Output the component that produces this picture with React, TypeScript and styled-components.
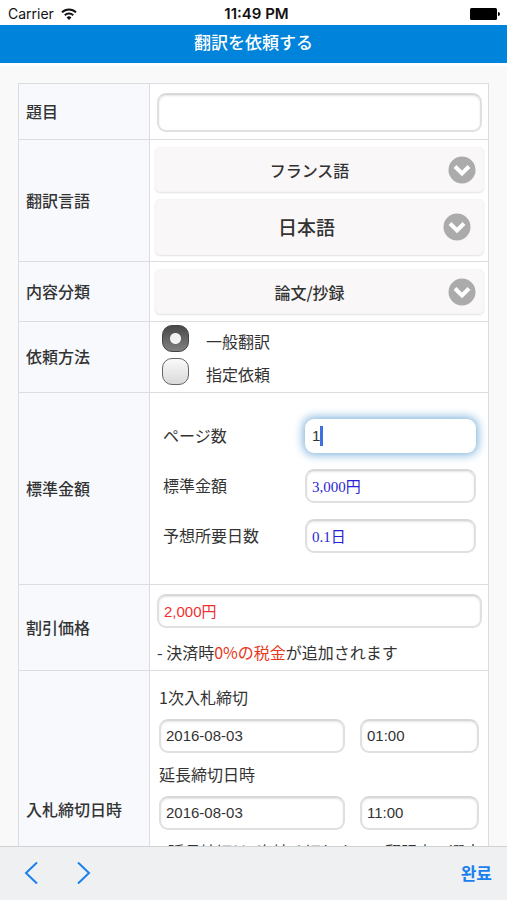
import React, { useState } from "react";
import styled, { createGlobalStyle, css } from "styled-components";

const jp = `"Noto Sans CJK JP", sans-serif`;
const latin = `"Liberation Sans", "Noto Sans CJK JP", sans-serif`;

const GlobalStyle = createGlobalStyle`
  *, *::before, *::after { box-sizing: border-box; }
  body {
    margin: 0;
    background: #f9f9f9;
    color: #333;
    font-family: ${jp};
    font-size: 16px;
    line-height: 24px;
  }
  button, input, select { font: inherit; color: inherit; margin: 0; }
`;

const Screen = styled.div`
  display: flex;
  flex-direction: column;
  height: 100vh;
`;

const StatusBar = styled.div`
  display: grid;
  grid-template-columns: 1fr auto 1fr;
  align-items: center;
  flex: none;
  height: 25px;
  padding: 2px 7px 0 8px;
  background: #fff;
  color: #111;
  font-family: Inter, sans-serif;
  font-size: 14px;
`;

const Carrier = styled.div`
  display: flex;
  align-items: center;
  gap: 7px;
`;

const Clock = styled.time`
  padding-left: 5px;
  font-size: 15px;
  font-weight: 600;
`;

const Battery = styled.svg`
  justify-self: end;
`;

const Header = styled.header`
  flex: none;
  height: 41px;
  background: #0083da;
  border-bottom: 3px solid #fff;
  color: #fff;
  text-align: center;
`;

const Title = styled.h1`
  margin: 0;
  padding-top: 5px;
  font-size: 17px;
  font-weight: 500;
  line-height: 24px;
`;

const Content = styled.main`
  flex: 1;
  min-height: 0;
  overflow-y: auto;
  scrollbar-width: none;
  padding: 17px 18px;
`;

const Form = styled.form`
  border: 1px solid #dcdde0;
  background: #fff;
`;

const Row = styled.div`
  display: grid;
  grid-template-columns: 131px 1fr;
  & + & { border-top: 1px solid #dcdde0; }
`;

const RowLabel = styled.label`
  display: flex;
  align-items: center;
  padding: 0 7px 2px;
  border-right: 1px solid #dcdde0;
  background: #f7f9fd;
  font-weight: 500;
`;

const Cell = styled.div<{ $pad: string; $gap?: number }>`
  display: flex;
  flex-direction: column;
  gap: ${(p) => p.$gap ?? 0}px;
  min-width: 0;
  padding: ${(p) => p.$pad};
`;

const TextInput = styled.input<{ $tone?: "blue" | "red"; $tall?: boolean }>`
  width: 100%;
  min-width: 0;
  height: ${(p) => (p.$tall ? 39 : 34)}px;
  padding: 0 5px 2px;
  border: 2px solid #e0e0e0;
  border-top-color: #d8d8d8;
  border-radius: 9px;
  background: #fff;
  box-shadow: inset 0 1px 2px #e4e4e4;
  outline: none;
  font-family: ${latin};
  font-size: 15px;
  ${(p) => p.$tone === "blue" && css`
    color: #2a1fd8;
    font-family: "Liberation Serif", "Noto Sans CJK JP", serif;
  `}
  ${(p) => p.$tone === "red" && css`color: #f03030;`}
`;

const FocusedField = styled.div`
  display: flex;
  align-items: center;
  height: 34px;
  padding: 0 7px;
  border-radius: 9px;
  background: #fff;
  box-shadow: 0 0 10px 2px #7fb4dc;
`;

const PageInput = styled.input`
  width: 8px;
  padding: 0;
  border: 0;
  outline: none;
  background: transparent;
  font-family: ${latin};
  font-size: 15px;
`;

const Caret = styled.span`
  width: 3px;
  height: 20px;
  background: #3f6fe0;
`;

const SelectBox = styled.div`
  position: relative;
`;

const Select = styled.select<{ $large?: boolean }>`
  display: block;
  width: 100%;
  height: ${(p) => (p.$large ? 56 : 45)}px;
  padding: ${(p) => (p.$large ? "0 32px 0 6px" : "0 26px 0 6px")};
  appearance: none;
  border: 1px solid #f6f5f5;
  border-radius: 5px;
  background: #f9f7f8;
  box-shadow: 0 1px 2px #e2e2e2;
  font-size: ${(p) => (p.$large ? 19 : 16)}px;
  font-weight: 500;
  text-align: center;
  text-align-last: center;
`;

const Chevron = styled.svg<{ $large?: boolean }>`
  position: absolute;
  top: 0;
  bottom: 0;
  right: ${(p) => (p.$large ? 13 : 8)}px;
  margin: auto 0;
  pointer-events: none;
`;

const RadioLabel = styled.label`
  display: flex;
  align-items: center;
  gap: 17px;
  height: 33px;
`;

const RadioText = styled.span`
  padding-top: 5px;
`;

const Radio = styled.input`
  appearance: none;
  width: 27px;
  height: 27px;
  border: 1px solid #666;
  border-radius: 10px;
  background: linear-gradient(#fafafa, #d9d9d9);
  &:checked {
    border-color: #444;
    background:
      radial-gradient(circle, #f2f2f2 0 5px, transparent 6px),
      linear-gradient(#484848, #808080);
  }
`;

const PriceLine = styled.div`
  display: grid;
  grid-template-columns: 142px 1fr;
  align-items: center;
`;

const PriceLabel = styled.label`
  padding-bottom: 2px;
`;

const Schedule = styled.div`
  display: grid;
  grid-template-columns: 186fr 119fr;
  gap: 15px;
  padding: 9px 7px 8px 0;
`;

const SubLabel = styled.div`
  line-height: 26px;
`;

const Note = styled.p`
  margin: 0;
`;

const Red = styled.span`
  color: #e8371a;
`;

const KeyboardBar = styled.nav`
  display: flex;
  align-items: center;
  flex: none;
  height: 54px;
  padding: 0 15px 2px 21px;
  border-top: 1px solid #cfd2d5;
  background: #eef0f2;
`;

const BarButton = styled.button`
  display: flex;
  padding: 0;
  border: 0;
  background: none;
  color: #1a80f0;
  cursor: pointer;
  & + & { margin-left: 28px; }
`;

const DoneButton = styled(BarButton)`
  && { margin-left: auto; }
  font-family: "Noto Sans CJK KR", sans-serif;
  font-size: 17px;
  font-weight: 700;
`;

function Picker({ id, label, options, large }: { id: string; label?: string; options: string[]; large?: boolean }) {
  return (
    <SelectBox>
      <Select id={id} aria-label={label} $large={large}>
        {options.map((o) => <option key={o}>{o}</option>)}
      </Select>
      <Chevron $large={large} width="28" height="28" viewBox="0 0 28 28" aria-hidden="true">
        <circle cx="14" cy="14" r="13.5" fill="#acabab" />
        <path d="M7 10.5 14 17.5l7-7" fill="none" stroke="#fff" strokeWidth="4" />
      </Chevron>
    </SelectBox>
  );
}

export default function App() {
  const [pages, setPages] = useState("1");
  return (
    <>
      <GlobalStyle />
      <Screen>
        <StatusBar>
          <Carrier>
            Carrier
            <svg width="16" height="12" viewBox="0 0 16 12" fill="none" stroke="#111" strokeWidth="2" aria-hidden="true">
              <path d="M1 4.4a10 10 0 0 1 14 0" />
              <path d="M3.8 7.3a6 6 0 0 1 8.4 0" />
              <path d="M8 12 5.6 9.4a3.4 3.4 0 0 1 4.8 0z" fill="#111" stroke="none" />
            </svg>
          </Carrier>
          <Clock>11:49 PM</Clock>
          <Battery width="30" height="12" viewBox="0 0 30 12" aria-hidden="true">
            <rect width="27" height="12" rx="1.5" fill="#000" />
            <path d="M28 4a2 2 0 0 1 0 4z" fill="#000" />
          </Battery>
        </StatusBar>
        <Header><Title>翻訳を依頼する</Title></Header>
        <Content>
          <Form>
            <Row>
              <RowLabel htmlFor="subject">題目</RowLabel>
              <Cell $pad="9px 6px 7px 7px"><TextInput id="subject" $tall /></Cell>
            </Row>
            <Row>
              <RowLabel htmlFor="source">翻訳言語</RowLabel>
              <Cell $pad="7px 4px 6px 5px" $gap={7}>
                <Picker id="source" options={["フランス語", "英語"]} />
                <Picker id="target" label="翻訳先の言語" options={["日本語", "英語"]} large />
              </Cell>
            </Row>
            <Row>
              <RowLabel htmlFor="category">内容分類</RowLabel>
              <Cell $pad="7px 4px 7px 5px"><Picker id="category" options={["論文/抄録"]} /></Cell>
            </Row>
            <Row role="radiogroup" aria-labelledby="method">
              <RowLabel as="div" id="method">依頼方法</RowLabel>
              <Cell $pad="0 12px 4px">
                <RadioLabel><Radio type="radio" name="method" defaultChecked /><RadioText>一般翻訳</RadioText></RadioLabel>
                <RadioLabel><Radio type="radio" name="method" /><RadioText>指定依頼</RadioText></RadioLabel>
              </Cell>
            </Row>
            <Row>
              <RowLabel as="div">標準金額</RowLabel>
              <Cell $pad="26px 12px 31px 13px" $gap={16}>
                <PriceLine>
                  <PriceLabel htmlFor="pages">ページ数</PriceLabel>
                  <FocusedField>
                    <PageInput id="pages" value={pages} onChange={(e) => setPages(e.target.value)} />
                    <Caret />
                  </FocusedField>
                </PriceLine>
                <PriceLine>
                  <PriceLabel htmlFor="price">標準金額</PriceLabel>
                  <TextInput id="price" $tone="blue" defaultValue="3,000円" />
                </PriceLine>
                <PriceLine>
                  <PriceLabel htmlFor="days">予想所要日数</PriceLabel>
                  <TextInput id="days" $tone="blue" defaultValue="0.1日" />
                </PriceLine>
              </Cell>
            </Row>
            <Row>
              <RowLabel htmlFor="discount">割引価格</RowLabel>
              <Cell $pad="9px 6px 6px 7px" $gap={12}>
                <TextInput id="discount" $tone="red" defaultValue="2,000円" />
                <Note>- 決済時<Red>0%の税金</Red>が追加されます</Note>
              </Cell>
            </Row>
            <Row>
              <RowLabel as="div">入札締切日時</RowLabel>
              <Cell $pad="13px 2px 84px 9px" $gap={0}>
                <SubLabel>1次入札締切</SubLabel>
                <Schedule>
                  <TextInput aria-label="1次入札締切の日付" defaultValue="2016-08-03" />
                  <TextInput aria-label="1次入札締切の時刻" defaultValue="01:00" />
                </Schedule>
                <SubLabel>延長締切日時</SubLabel>
                <Schedule>
                  <TextInput aria-label="延長締切の日付" defaultValue="2016-08-03" />
                  <TextInput aria-label="延長締切の時刻" defaultValue="11:00" />
                </Schedule>
                <SubLabel>- 延長締切は1次締め切りまでの翻訳家の選定</SubLabel>
              </Cell>
            </Row>
          </Form>
        </Content>
        <KeyboardBar>
          <BarButton type="button" aria-label="前の項目">
            <svg width="20" height="24" viewBox="0 0 20 24" fill="none" stroke="currentColor" strokeWidth="2"><path d="M16 1.5 5 12l11 10.5" /></svg>
          </BarButton>
          <BarButton type="button" aria-label="次の項目">
            <svg width="24" height="24" viewBox="0 0 24 24" fill="none" stroke="currentColor" strokeWidth="2"><path d="M9 1.5 20 12 9 22.5" /></svg>
          </BarButton>
          <DoneButton type="button">완료</DoneButton>
        </KeyboardBar>
      </Screen>
    </>
  );
}
